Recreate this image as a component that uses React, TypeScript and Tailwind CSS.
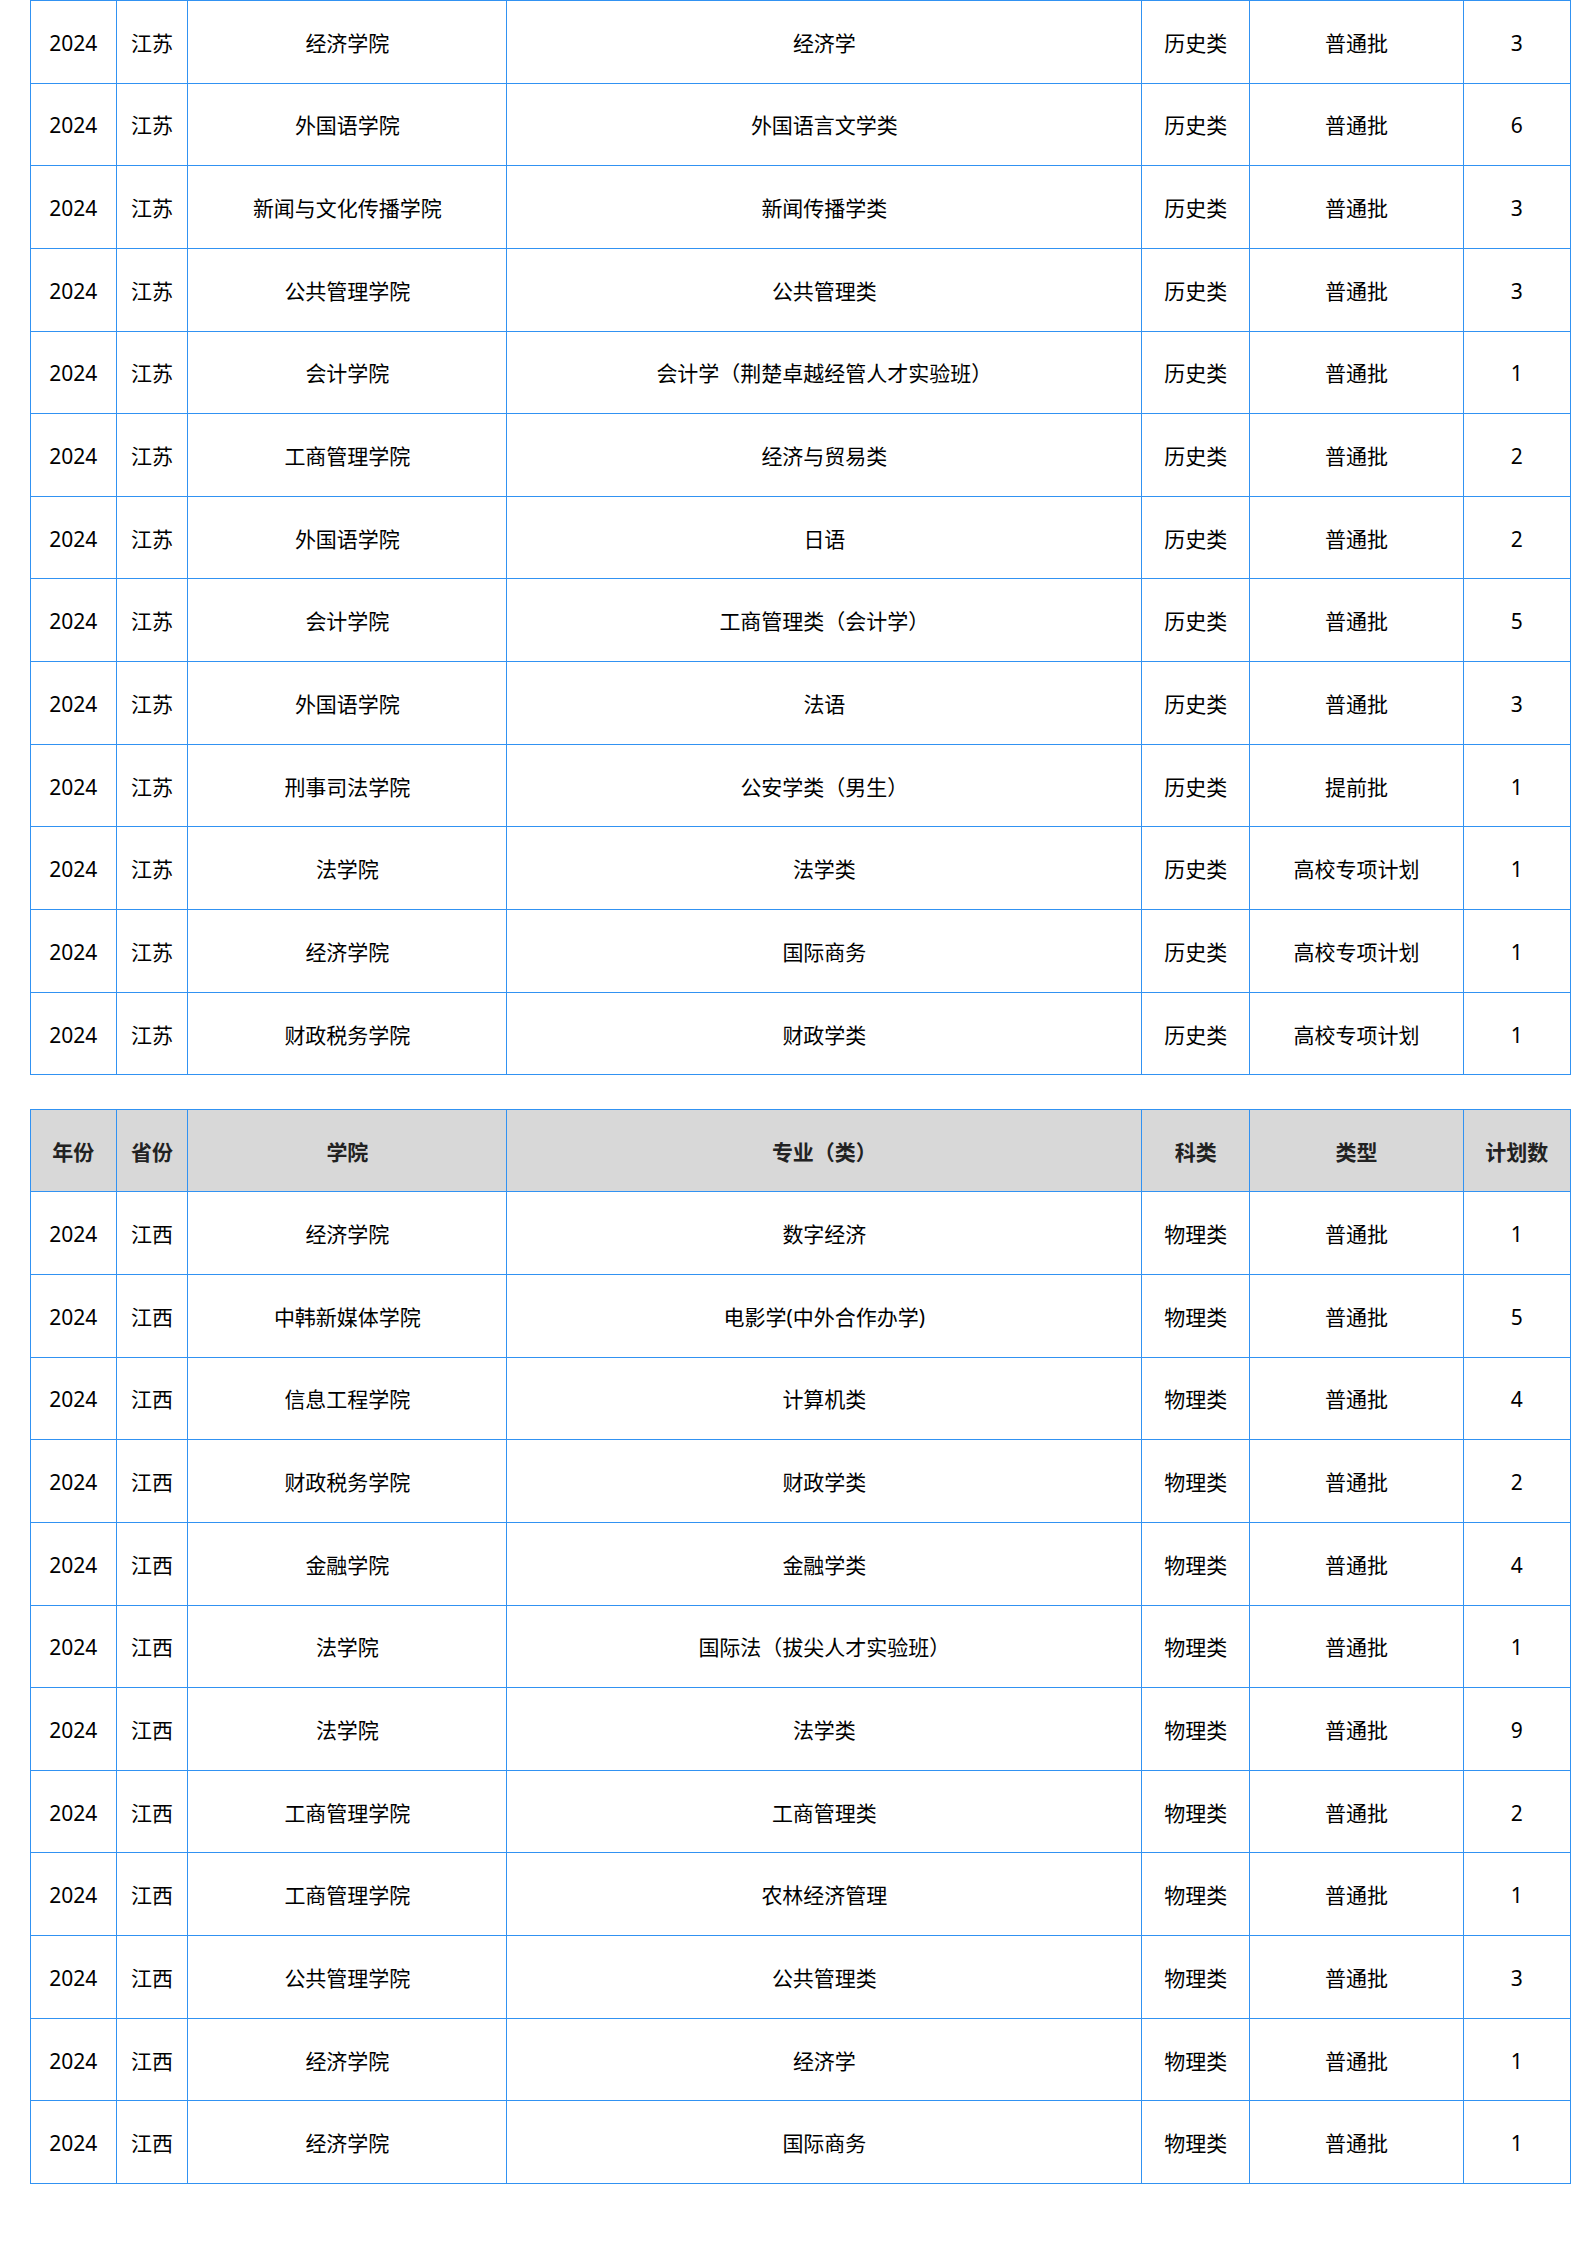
const jiangsu: [string, string, string, string, string][] = [
  ["经济学院", "经济学", "历史类", "普通批", "3"],
  ["外国语学院", "外国语言文学类", "历史类", "普通批", "6"],
  ["新闻与文化传播学院", "新闻传播学类", "历史类", "普通批", "3"],
  ["公共管理学院", "公共管理类", "历史类", "普通批", "3"],
  ["会计学院", "会计学（荆楚卓越经管人才实验班）", "历史类", "普通批", "1"],
  ["工商管理学院", "经济与贸易类", "历史类", "普通批", "2"],
  ["外国语学院", "日语", "历史类", "普通批", "2"],
  ["会计学院", "工商管理类（会计学）", "历史类", "普通批", "5"],
  ["外国语学院", "法语", "历史类", "普通批", "3"],
  ["刑事司法学院", "公安学类（男生）", "历史类", "提前批", "1"],
  ["法学院", "法学类", "历史类", "高校专项计划", "1"],
  ["经济学院", "国际商务", "历史类", "高校专项计划", "1"],
  ["财政税务学院", "财政学类", "历史类", "高校专项计划", "1"],
]

const jiangxi: [string, string, string, string, string][] = [
  ["经济学院", "数字经济", "物理类", "普通批", "1"],
  ["中韩新媒体学院", "电影学(中外合作办学)", "物理类", "普通批", "5"],
  ["信息工程学院", "计算机类", "物理类", "普通批", "4"],
  ["财政税务学院", "财政学类", "物理类", "普通批", "2"],
  ["金融学院", "金融学类", "物理类", "普通批", "4"],
  ["法学院", "国际法（拔尖人才实验班）", "物理类", "普通批", "1"],
  ["法学院", "法学类", "物理类", "普通批", "9"],
  ["工商管理学院", "工商管理类", "物理类", "普通批", "2"],
  ["工商管理学院", "农林经济管理", "物理类", "普通批", "1"],
  ["公共管理学院", "公共管理类", "物理类", "普通批", "3"],
  ["经济学院", "经济学", "物理类", "普通批", "1"],
  ["经济学院", "国际商务", "物理类", "普通批", "1"],
]

// 单元格：蓝色细边框，文字居中
const td = "border border-[#3192f2] text-center align-middle px-0 pt-[3px] pb-0"

function Cols() {
  return (
    <colgroup>
      <col className="w-[85.6px]" />
      <col className="w-[71.9px]" />
      <col className="w-[318.8px]" />
      <col className="w-[635.2px]" />
      <col className="w-[107.8px]" />
      <col className="w-[213.4px]" />
      <col className="w-[107.3px]" />
    </colgroup>
  )
}

function Rows({ province, rows }: { province: string; rows: [string, string, string, string, string][] }) {
  return (
    <>
      {rows.map((r, i) => (
        <tr key={i} className="h-[82.65px]">
          <td className={td}>2024</td>
          <td className={td}>{province}</td>
          {r.map((c, j) => (
            <td key={j} className={td}>
              {c}
            </td>
          ))}
        </tr>
      ))}
    </>
  )
}

export default function App() {
  return (
    <div
      className="bg-white min-h-[2245px] pl-[30px] text-[21px] text-black leading-none"
      style={{ fontFamily: '"Noto Sans", "Noto Sans CJK SC", sans-serif' }}
    >
      <table className="table-fixed border-collapse w-[1540px]">
        <Cols />
        <tbody>
          <Rows province="江苏" rows={jiangsu} />
        </tbody>
      </table>

      <table className="table-fixed border-collapse w-[1540px] mt-[34px]">
        <Cols />
        <thead>
          <tr className="h-[82px] bg-[#d8d8d8] font-bold text-[#222]">
            <th className={td}>年份</th>
            <th className={td}>省份</th>
            <th className={td}>学院</th>
            <th className={td}>专业（类）</th>
            <th className={td}>科类</th>
            <th className={td}>类型</th>
            <th className={td}>计划数</th>
          </tr>
        </thead>
        <tbody>
          <Rows province="江西" rows={jiangxi} />
        </tbody>
      </table>
    </div>
  )
}
